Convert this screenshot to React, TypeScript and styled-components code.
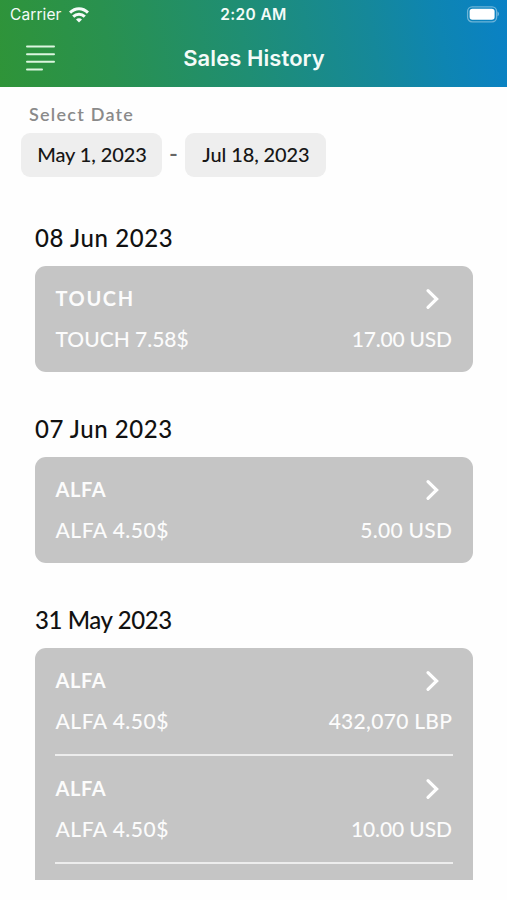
import React from "react";
import styled, { createGlobalStyle } from "styled-components";

const GlobalStyle = createGlobalStyle`
  *, *::before, *::after { box-sizing: border-box; }
  body { margin: 0; background: #fefefe; }
`;

const Screen = styled.div`
  width: 507px;
  height: 900px;
  display: flex;
  flex-direction: column;
  overflow: hidden;
  background: #fefefe;
  color: #111;
  font-family: Lato, "Open Sans", sans-serif;
`;

const Header = styled.header`
  flex: none;
  height: 87px;
  background: linear-gradient(80deg, #2f9438 0%, #29914f 22%, #1f8e73 48%, #15889a 73%, #0e85b2 86%, #0981c6 100%);
  color: #f4fbf8;
  font-family: Inter, sans-serif;
`;

const StatusBar = styled.div`
  display: grid;
  grid-template-columns: 1fr auto 1fr;
  align-items: center;
  height: 30px;
  padding: 0 8px 0 10px;
  line-height: 30px;
`;

const Carrier = styled.div`
  display: flex;
  align-items: center;
  gap: 7px;
  font-size: 15.5px;
  letter-spacing: 0.1px;
`;

const Clock = styled.div`
  margin-left: -2px;
  font-size: 15.5px;
  font-weight: 600;
  letter-spacing: 0.35px;
`;

const Battery = styled.svg`
  justify-self: end;
  margin-bottom: 1px;
`;

const NavBar = styled.div`
  display: grid;
  grid-template-columns: 1fr auto 1fr;
  align-items: center;
  height: 56px;
  padding: 0 24px 0 25px;
`;

const MenuIcon = styled.svg`
  display: block;
`;

const Title = styled.h1`
  margin: 0;
  font-size: 22px;
  font-weight: 600;
  letter-spacing: 0.08px;
`;

const Filter = styled.section`
  flex: none;
  height: 129px;
  padding: 16px 21px 0;
`;

const FilterLabel = styled.div`
  height: 30px;
  padding-left: 8px;
  line-height: 23px;
  font-size: 18px;
  font-weight: 600;
  letter-spacing: 1.25px;
  color: #8a8a8a;
`;

const DateRange = styled.div`
  display: flex;
  align-items: center;
`;

const DateButton = styled.button`
  width: 141px;
  height: 44px;
  padding: 0 0 1px 1px;
  border: 0;
  border-radius: 9px;
  background: #eee;
  color: #161616;
  font: 500 20px/43px Lato, "Open Sans", sans-serif;
  letter-spacing: -0.1px;
  white-space: nowrap;
`;

const Dash = styled.span`
  width: 23px;
  text-align: center;
  font-size: 24px;
  font-weight: 500;
  line-height: 40px;
  padding-bottom: 3px;
  color: #666;
`;

const History = styled.main`
  flex: none;
  height: 664px;
  padding: 0 34px 0 35px;
  overflow: hidden;
`;

const Day = styled.section`
  margin-bottom: 35px;
`;

const DayTitle = styled.h2<{ $track: number }>`
  height: 50px;
  margin: 0;
  line-height: 44px;
  font-size: 24px;
  font-weight: 500;
  letter-spacing: ${(p) => p.$track}px;
`;

const Card = styled.div<{ $continues?: boolean }>`
  height: ${(p) => (p.$continues ? "232px" : "auto")};
  padding: 0 20px;
  border-radius: ${(p) => (p.$continues ? "11px 11px 0 0" : "11px")};
  background: #c5c5c5;
  color: #fcfcfc;
`;

const Sale = styled.article<{ $divided?: boolean }>`
  display: flex;
  flex-direction: column;
  height: ${(p) => (p.$divided ? 108 : 106)}px;
  padding-top: 18px;
  border-bottom: ${(p) => (p.$divided ? "2px solid #ededed" : "0")};
`;

const SaleLine = styled.div`
  display: flex;
  justify-content: space-between;
  align-items: center;
  height: 30px;
  margin-bottom: 9px;
  padding: 0 1px 0 0.5px;
`;

const Provider = styled.span<{ $track: number }>`
  padding-bottom: 2px;
  font-size: 20px;
  font-weight: 700;
  letter-spacing: ${(p) => p.$track}px;
`;

const Detail = styled.span<{ $track: number }>`
  font-size: 21px;
  font-weight: 500;
  letter-spacing: ${(p) => p.$track}px;
  margin-right: ${(p) => -p.$track}px;
`;

const Chevron = styled.svg`
  margin-right: 11px;
`;

type SaleItem = {
  provider: string;
  providerTrack: number;
  product: string;
  productTrack: number;
  amount: string;
  amountTrack: number;
};

type DayGroup = { date: string; track: number; continues?: boolean; sales: SaleItem[] };

const alfa = { provider: "ALFA", providerTrack: 0.6, product: "ALFA 4.50$", productTrack: 0.5 };

const days: DayGroup[] = [
  {
    date: "08 Jun 2023",
    track: 0.6,
    sales: [
      { provider: "TOUCH", providerTrack: 1.6, product: "TOUCH 7.58$", productTrack: 0, amount: "17.00 USD", amountTrack: -0.2 },
    ],
  },
  { date: "07 Jun 2023", track: 0.55, sales: [{ ...alfa, amount: "5.00 USD", amountTrack: 0.3 }] },
  {
    date: "31 May 2023",
    track: -0.4,
    continues: true,
    sales: [
      { ...alfa, amount: "432,070 LBP", amountTrack: 0.3 },
      { ...alfa, amount: "10.00 USD", amountTrack: -0.1 },
    ],
  },
];

export default function App() {
  return (
    <Screen>
      <GlobalStyle />
      <Header>
        <StatusBar>
          <Carrier>
            Carrier
            <svg width="20" height="16" viewBox="0 0 20 16" fill="none" stroke="currentColor" strokeWidth="3">
              <path d="M1 5.6 C6.2 0.3 13.8 0.3 19 5.6" />
              <path d="M4.2 9.6 C7.5 6.4 12.5 6.4 15.8 9.6" />
              <path d="M10 15.4 L7 12.4 C8.6 10.8 11.4 10.8 13 12.4 Z" fill="currentColor" stroke="none" />
            </svg>
          </Carrier>
          <Clock>2:20 AM</Clock>
          <Battery width="33" height="17" viewBox="0 0 33 17" fill="none">
            <rect x="1.6" y="0.8" width="29" height="15" rx="4.5" stroke="#fff" strokeOpacity="0.4" strokeWidth="1.3" />
            <rect x="3.6" y="2.8" width="25" height="11" rx="2.8" fill="#fff" />
            <path d="M31.6 5.6 C33.2 6.4 33.2 9.4 31.6 10.2 Z" fill="#fff" fillOpacity="0.5" />
          </Battery>
        </StatusBar>
        <NavBar>
          <MenuIcon width="30" height="28" viewBox="0 0 30 28" stroke="#dcf6df" strokeWidth="2" strokeLinecap="round">
            <path d="M2 2.5H29M2 10.2H29M2 17.8H29M2 25.5H17" />
          </MenuIcon>
          <Title>Sales History</Title>
        </NavBar>
      </Header>
      <Filter>
        <FilterLabel>Select Date</FilterLabel>
        <DateRange>
          <DateButton>May 1, 2023</DateButton>
          <Dash>-</Dash>
          <DateButton>Jul 18, 2023</DateButton>
        </DateRange>
      </Filter>
      <History>
        {days.map((day) => (
          <Day key={day.date}>
            <DayTitle $track={day.track}>{day.date}</DayTitle>
            <Card $continues={day.continues}>
              {day.sales.map((sale, i) => (
                <Sale key={i} $divided={day.continues}>
                  <SaleLine>
                    <Provider $track={sale.providerTrack}>{sale.provider}</Provider>
                    <Chevron width="16" height="22" viewBox="0 0 16 22" fill="none" stroke="#fff" strokeWidth="3.2">
                      <path d="M3 2.6 L11.6 11 L3 19.4" strokeLinecap="round" />
                    </Chevron>
                  </SaleLine>
                  <SaleLine>
                    <Detail $track={sale.productTrack}>{sale.product}</Detail>
                    <Detail $track={sale.amountTrack}>{sale.amount}</Detail>
                  </SaleLine>
                </Sale>
              ))}
            </Card>
          </Day>
        ))}
      </History>
    </Screen>
  );
}
